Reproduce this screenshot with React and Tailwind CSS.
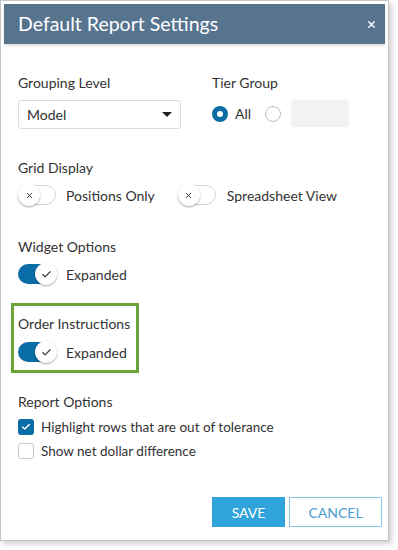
import { X, Check } from 'lucide-react';

function Toggle({ on }) {
  return (
    <div className={`relative w-[38px] h-[20px] rounded-full ${on ? 'bg-[#0b6da6]' : 'bg-white border border-[#cfd4d9]'}`}>
      <div
        className={`absolute top-1/2 -translate-y-1/2 w-[22px] h-[22px] rounded-full bg-white flex items-center justify-center shadow-[0_1px_2px_rgba(0,0,0,0.35)] ${on ? 'right-[-1px]' : 'left-[-1px]'}`}
      >
        {on ? (
          <Check size={11} strokeWidth={2.5} className="text-[#333]" />
        ) : (
          <X size={9} strokeWidth={2.5} className="text-[#333]" />
        )}
      </div>
    </div>
  );
}

function Label({ children, className = '' }) {
  return <div className={`text-[14px] leading-[20px] text-[#333] ${className}`}>{children}</div>;
}

export default function App() {
  return (
    <div className="w-[398px] h-[550px] bg-white" style={{ fontFamily: 'Lato, "Noto Sans", sans-serif' }}>
      <div className="w-[389px] h-[541px] border border-[#c4c4c4] shadow-[3px_3px_5px_rgba(0,0,0,0.18)] p-[3px] flex flex-col">
        {/* Header */}
        <div className="h-[40px] bg-[#57748f] flex items-center justify-between pl-[14px] pr-[8px] shadow-[0_2px_2px_rgba(0,0,0,0.12)]">
          <h2 className="text-[19.5px] text-white leading-none">Default Report Settings</h2>
          <X size={11} strokeWidth={3} className="text-white" />
        </div>

        {/* Body */}
        <div className="flex flex-col px-[14px]">
          <div className="flex gap-[31px] mt-[29px]">
            <div className="w-[163px]">
              <Label>Grouping Level</Label>
              <div className="mt-[7px] h-[29px] border border-[#dcdcdc] rounded-[3px] flex items-center justify-between pl-[8px] pr-[8px]">
                <span className="text-[14px] text-[#333]">Model</span>
                <svg width="10" height="5" viewBox="0 0 10 5"><path d="M0 0h10L5 5z" fill="#222" /></svg>
              </div>
            </div>
            <div>
              <Label>Tier Group</Label>
              <div className="mt-[7px] flex items-center h-[27px]">
                <div className="w-[16px] h-[16px] rounded-full border-[5px] border-[#0b6da6] bg-white" />
                <span className="ml-[7px] text-[14px] text-[#333]">All</span>
                <div className="ml-[14px] w-[16px] h-[16px] rounded-full border border-[#b9bec4] bg-white" />
                <div className="ml-[10px] w-[58px] h-[27px] rounded-[3px] bg-[#f2f2f2]" />
              </div>
            </div>
          </div>

          <Label className="mt-[29px]">Grid Display</Label>
          <div className="mt-[6px] flex items-center h-[22px]">
            <Toggle on={false} />
            <span className="ml-[10px] text-[14px] text-[#333]">Positions Only</span>
            <div className="ml-[23px]"><Toggle on={false} /></div>
            <span className="ml-[11px] text-[14px] text-[#333]">Spreadsheet View</span>
          </div>

          <Label className="mt-[31px]">Widget Options</Label>
          <div className="mt-[6px] flex items-center h-[22px]">
            <Toggle on />
            <span className="ml-[10px] text-[14px] text-[#333]">Expanded</span>
          </div>

          <div className="mt-[18px] -ml-[7px] w-[128px] border-[3px] border-[#6aa338] pl-[4px] pt-[8px] pb-[7px]">
            <Label>Order Instructions</Label>
            <div className="mt-[7px] flex items-center h-[22px]">
              <Toggle on />
              <span className="ml-[10px] text-[14px] text-[#333]">Expanded</span>
            </div>
          </div>

          <Label className="mt-[19px]">Report Options</Label>
          <div className="mt-[5px] flex flex-col gap-[4px]">
            <div className="flex items-center h-[20px] gap-[7px]">
              <div className="w-[16px] h-[16px] rounded-[3px] bg-[#0b6da6] flex items-center justify-center">
                <Check size={10} strokeWidth={3.5} className="text-white" />
              </div>
              <span className="text-[13.5px] text-[#333]">Highlight rows that are out of tolerance</span>
            </div>
            <div className="flex items-center h-[20px] gap-[7px]">
              <div className="w-[16px] h-[16px] rounded-[3px] border border-[#c4c9cf] bg-white" />
              <span className="text-[13.5px] text-[#333]">Show net dollar difference</span>
            </div>
          </div>

          <div className="mt-[36px] -mr-[11px] flex justify-end gap-[4px]">
            <button className="w-[73px] h-[30px] bg-[#2fa3da] text-white text-[14px]">SAVE</button>
            <button className="w-[93px] h-[30px] border border-[#8cc6e6] text-[#4a9fd0] text-[14px] bg-white">CANCEL</button>
          </div>
        </div>
      </div>
    </div>
  );
}
